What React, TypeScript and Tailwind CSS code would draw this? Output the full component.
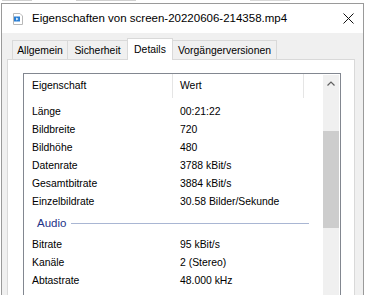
import React from 'react'

const video: [string, string][] = [
  ['Länge', '00:21:22'],
  ['Bildbreite', '720'],
  ['Bildhöhe', '480'],
  ['Datenrate', '3788 kBit/s'],
  ['Gesamtbitrate', '3884 kBit/s'],
  ['Einzelbildrate', '30.58 Bilder/Sekunde'],
]

const audio: [string, string][] = [
  ['Bitrate', '95 kBit/s'],
  ['Kanäle', '2 (Stereo)'],
  ['Abtastrate', '48.000 kHz'],
]

const tabs = [
  { label: 'Allgemein', w: 'w-[56px]' },
  { label: 'Sicherheit', w: 'w-[61px]' },
  { label: 'Details', w: 'w-[46px]', active: true },
  { label: 'Vorgängerversionen', w: 'w-[105px]' },
]

function Row({ label, value }: { label: string; value: string }) {
  return (
    <div className="flex h-[18px] items-center leading-[18px]">
      <div className="w-[149px] pl-[8px]">{label}</div>
      <div className="pl-[7px] whitespace-nowrap">{value}</div>
    </div>
  )
}

export default function App() {
  return (
    <div className="w-[366px] h-[295px] overflow-hidden bg-white font-['Liberation_Sans',Arial,sans-serif] text-black">
      {/* Hintergrundfenster: nur Reste sichtbar */}
      <div className="h-[3px] flex items-start gap-[4px] pl-[2px]">
        <div className="w-[30px] h-[1px] bg-[#d0d0d0]" />
        <div className="ml-[40px] w-[60px] h-[1px] bg-[#d0d0d0]" />
        <div className="ml-[110px] w-[40px] h-[1px] bg-[#d8d8d8]" />
      </div>

      <div className="ml-[1px] w-[363px] border-t border-l border-r border-[#9a9a9a]">
        {/* Titelleiste */}
        <div className="h-[29px] flex items-center bg-white">
          <svg width="10" height="12" viewBox="0 0 10 12" className="ml-[11px] mt-[1px]">
            <path d="M0.5 0.5h6.5l2.5 2.5v8.5h-9z" fill="#fff" stroke="#b8b8b8" />
            <rect x="1" y="3.5" width="6" height="5" fill="#2a7fd4" />
            <path d="M3.2 4.6v2.8l2.3-1.4z" fill="#fff" />
          </svg>
          <span className="ml-[9px] text-[11.5px] whitespace-nowrap">Eigenschaften von screen-20220606-214358.mp4</span>
          <svg width="11" height="11" viewBox="0 0 11 11" className="ml-auto mr-[9px]">
            <path d="M0.5 0.5l10 10M10.5 0.5l-10 10" stroke="#111" strokeWidth="1" />
          </svg>
        </div>

        <div className="bg-[#f0f0f0] pt-[5px] pl-[5px] pr-[8px] text-[10.4px]">
          {/* Reiter */}
          <div className="relative z-10 -mb-px flex h-[22px] items-end pl-[5px]">
            {tabs.map((t, i) =>
              t.active ? (
                <div key={t.label} className={`${t.w} h-[22px] -ml-px border border-b-0 border-[#d9d9d9] bg-white pt-[4px] text-center leading-[14px]`}>
                  {t.label}
                </div>
              ) : (
                <div key={t.label} className={`${t.w} h-[19px] mb-[1px] ${i ? '-ml-px' : ''} border border-b-0 border-[#d9d9d9] bg-[#f0f0f0] pt-[3px] text-center leading-[14px] whitespace-nowrap`}>
                  {t.label}
                </div>
              )
            )}
          </div>

          {/* Registerinhalt */}
          <div className="w-[348px] h-[240px] border border-b-0 border-[#d9d9d9] bg-white pt-[13px] pl-[15px]">
            <div className="w-[318px] h-[230px] flex border border-b-0 border-[#828790]">
              <div className="w-[299px]">
                <div className="flex h-[24px] items-center leading-[24px]">
                  <div className="w-[149px] h-[24px] pl-[8px] border-r border-[#e5e5e5]">Eigenschaft</div>
                  <div className="w-[131px] h-[24px] pl-[7px] border-r border-[#e5e5e5]">Wert</div>
                </div>
                <div className="mt-[5px]">
                  {video.map(([l, v]) => (
                    <Row key={l} label={l} value={v} />
                  ))}
                  <div className="flex h-[25px] items-center">
                    <span className="pl-[13px] text-[11.5px] text-[#1e3287]">Audio</span>
                    <div className="ml-[5px] w-[238px] h-px bg-[#a9b6d3]" />
                  </div>
                  {audio.map(([l, v]) => (
                    <Row key={l} label={l} value={v} />
                  ))}
                </div>
              </div>
              {/* Bildlaufleiste */}
              <div className="w-[16px] mr-[1px] mt-[1px] bg-[#f0f0f0]">
                <div className="h-[16px] flex items-center justify-center">
                  <svg width="8" height="5" viewBox="0 0 8 5">
                    <path d="M0.5 4.5l3.5-3.5 3.5 3.5" fill="none" stroke="#606060" strokeWidth="1.2" />
                  </svg>
                </div>
                <div className="mt-[40px] h-[97px] bg-[#cdcdcd]" />
              </div>
            </div>
          </div>
        </div>
      </div>
    </div>
  )
}
